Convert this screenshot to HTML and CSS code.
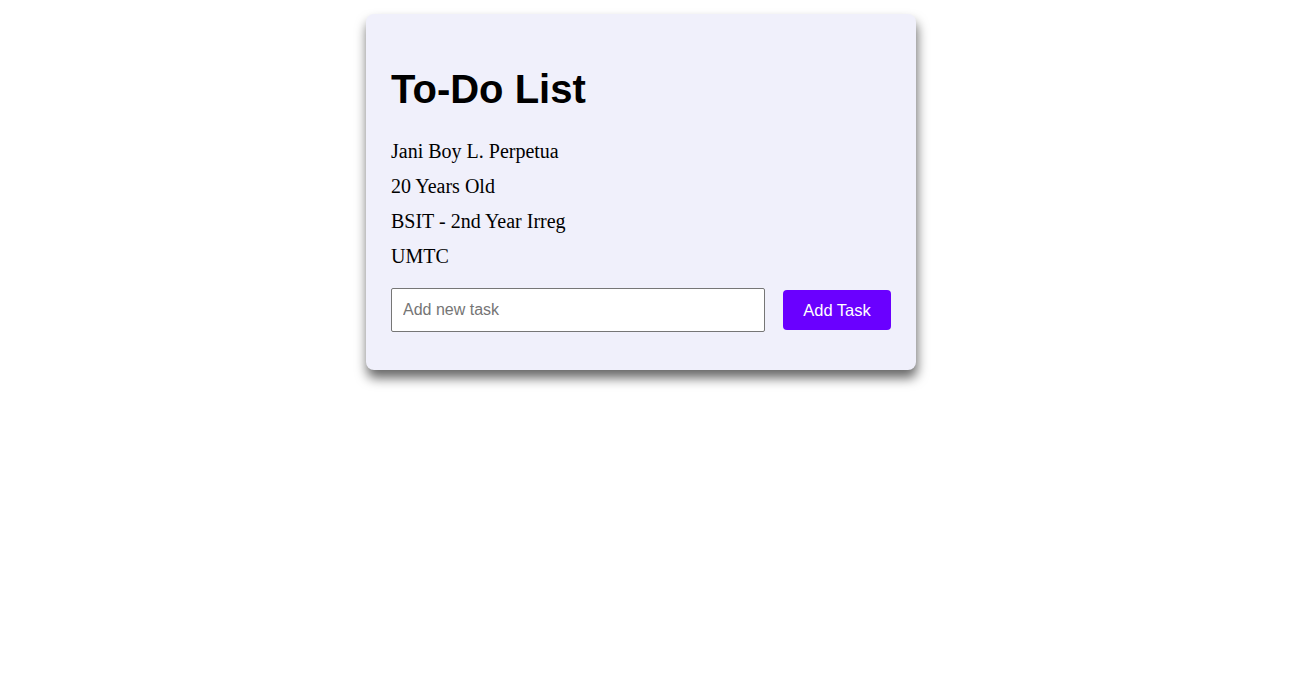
FILE: index.html
```html
<!DOCTYPE html>
<html>
<head>
<meta charset="utf-8">
<title>To-Do List</title>
<link rel="stylesheet" href="styles.css">
</head>
<body>
<div class="page">
  <div class="card">
    <h1 class="title">To-Do List</h1>
    <p class="info">Jani Boy L. Perpetua</p>
    <p class="info">20 Years Old</p>
    <p class="info">BSIT - 2nd Year Irreg</p>
    <p class="info">UMTC</p>
    <div class="add-row">
      <input class="task-input" type="text" placeholder="Add new task">
      <button class="add-btn">Add Task</button>
    </div>
  </div>
</div>
</body>
</html>
```

FILE: styles.css
```css
html, body {
  margin: 0;
  padding: 0;
  background: #ffffff;
}
.page {
  display: flex;
  justify-content: center;
  align-items: flex-start;
  box-sizing: border-box;
  min-height: 100vh;
  padding: 14px 13px 0 0;
}
.card {
  width: 500px;
  padding: 25px;
  background: #f0f0fb;
  border-radius: 8px;
  box-shadow: 1px 8px 12px rgba(0, 0, 0, 0.6);
  font-family: "Liberation Serif", "Times New Roman", serif;
}
.title {
  font-family: "Liberation Sans", Arial, sans-serif;
  font-size: 40px;
  font-weight: bold;
  line-height: 46px;
  margin: 27px 0 28px;
  color: #000;
}
.info {
  font-size: 20px;
  line-height: 23px;
  margin: 12px 0;
  color: #000;
}
.add-row {
  display: flex;
  align-items: center;
  gap: 18px;
  margin: 20px 0 13px;
}
.task-input {
  flex: 1;
  height: 44px;
  box-sizing: border-box;
  padding: 0 11px;
  border: 1px solid #767676;
  border-radius: 2px;
  font-family: "Liberation Sans", Arial, sans-serif;
  font-size: 16px;
  background: #fff;
}
.task-input::placeholder {
  color: #757575;
}
.add-btn {
  width: 108px;
  height: 40px;
  padding: 0;
  border: none;
  border-radius: 4px;
  background: #6a00ff;
  color: #fff;
  font-family: "Liberation Sans", Arial, sans-serif;
  font-size: 16.5px;
}
```
